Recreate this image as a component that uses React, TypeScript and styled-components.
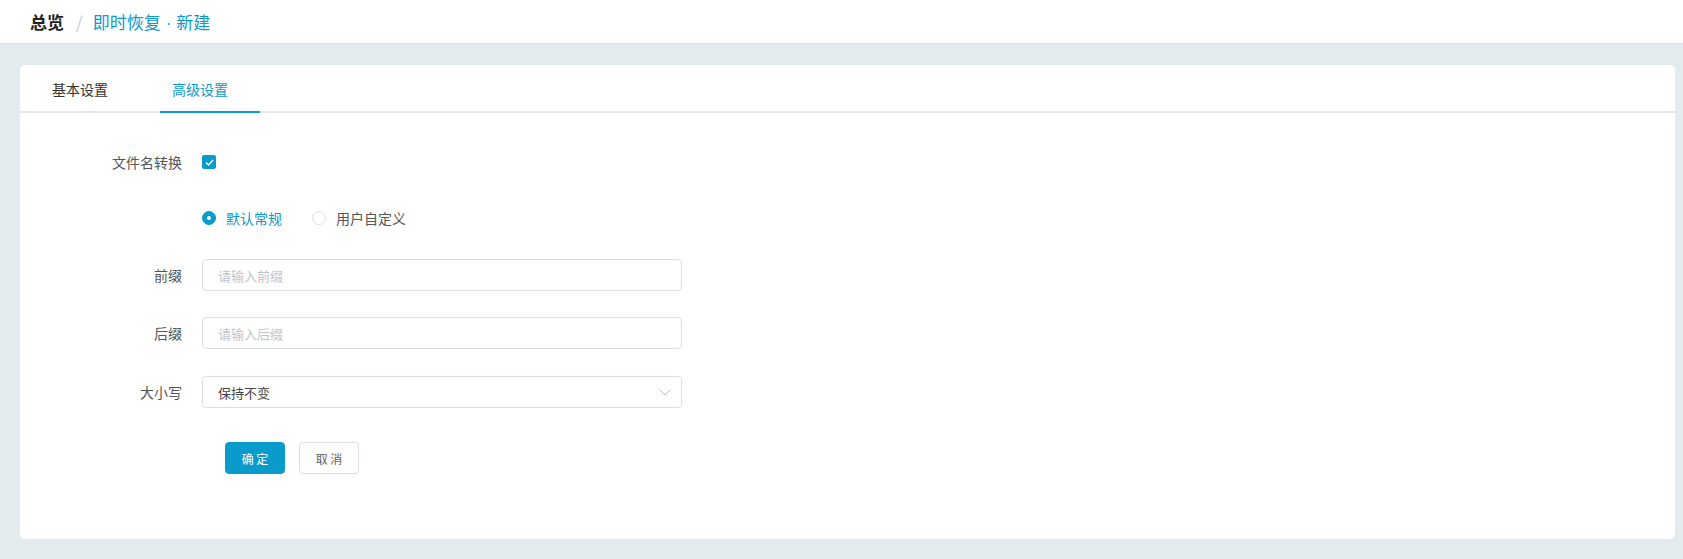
import React, { useState } from 'react';
import styled, { createGlobalStyle } from 'styled-components';

const BLUE = '#0a9bcd';

const GlobalStyle = createGlobalStyle`
  html, body {
    margin: 0;
    padding: 0;
    background: #e4ebee;
    font-family: 'Noto Sans CJK SC', 'Noto Sans', 'Liberation Sans', sans-serif;
  }
  * { box-sizing: border-box; }
`;

const Header = styled.header`
  height: 44px;
  background: #fff;
  border-bottom: 1px solid #dde1e4;
  display: flex;
  align-items: center;
  padding-left: 30px;
  font-size: 17px;
`;

const Crumb = styled.span<{ $active?: boolean }>`
  color: ${p => (p.$active ? BLUE : '#222')};
  font-weight: ${p => (p.$active ? 400 : 700)};
`;

const Dot = styled.span`
  font-family: 'Liberation Sans', sans-serif;
  margin: 0 5px;
`;

const Sep = styled.span`
  color: #c6c9cf;
  margin: 0 10px 0 12px;
`;

const Main = styled.main`
  padding: 21px 8px 22px 20px;
`;

const Card = styled.section`
  background: #fff;
  border-radius: 5px;
  padding-bottom: 65px;
`;

const TabBar = styled.div`
  display: flex;
  height: 48px;
  border-bottom: 2px solid #e4e8ee;
  padding-left: 20px;
  gap: 20px;
`;

const Tab = styled.div<{ $active?: boolean }>`
  width: 100px;
  padding-left: 12px;
  display: flex;
  align-items: center;
  font-size: 14px;
  color: ${p => (p.$active ? BLUE : '#333')};
  border-bottom: 2px solid ${p => (p.$active ? BLUE : 'transparent')};
  margin-bottom: -2px;
  padding-top: 2px;
  cursor: pointer;
`;

const Form = styled.div`
  padding-top: 33px;
`;

const Row = styled.div<{ $mt?: number }>`
  display: flex;
  align-items: center;
  height: 32px;
  margin-top: ${p => p.$mt ?? 0}px;
`;

const Label = styled.label`
  width: 162px;
  text-align: right;
  font-size: 14px;
  color: #555;
  margin-right: 20px;
  flex-shrink: 0;
`;

const CheckBox = styled.span<{ $on: boolean }>`
  width: 14px;
  height: 14px;
  border-radius: 2px;
  background: ${p => (p.$on ? BLUE : '#fff')};
  border: 1px solid ${p => (p.$on ? BLUE : '#dcdfe6')};
  display: inline-flex;
  align-items: center;
  justify-content: center;
  cursor: pointer;
`;

const RadioGroup = styled.div`
  display: flex;
  align-items: center;
  gap: 30px;
`;

const RadioItem = styled.label<{ $on: boolean }>`
  display: flex;
  align-items: center;
  gap: 10px;
  font-size: 14px;
  color: ${p => (p.$on ? BLUE : '#555')};
  cursor: pointer;
`;

const RadioDot = styled.span<{ $on: boolean }>`
  width: 14px;
  height: 14px;
  border-radius: 50%;
  border: 1px solid ${p => (p.$on ? BLUE : '#dcdfe6')};
  background: ${p => (p.$on ? BLUE : '#fff')};
  display: inline-flex;
  align-items: center;
  justify-content: center;
  &::after {
    content: '';
    width: 4px;
    height: 4px;
    border-radius: 50%;
    background: #fff;
    display: ${p => (p.$on ? 'block' : 'none')};
  }
`;

const Input = styled.input`
  width: 480px;
  height: 32px;
  border: 1px solid #dcdfe6;
  border-radius: 4px;
  padding: 0 15px;
  font-size: 13px;
  font-family: inherit;
  color: #444;
  outline: none;
  &::placeholder {
    color: #c0c4cc;
  }
`;

const Select = styled.div`
  width: 480px;
  height: 32px;
  border: 1px solid #dcdfe6;
  border-radius: 4px;
  padding: 0 10px 0 15px;
  display: flex;
  align-items: center;
  justify-content: space-between;
  font-size: 13px;
  color: #444;
  cursor: pointer;
`;

const Actions = styled.div`
  display: flex;
  gap: 14px;
  margin-left: 205px;
  margin-top: 34px;
`;

const Button = styled.button<{ $primary?: boolean }>`
  width: 60px;
  height: 32px;
  border-radius: 4px;
  font-size: 12px;
  font-family: inherit;
  cursor: pointer;
  background: ${p => (p.$primary ? BLUE : '#fff')};
  color: ${p => (p.$primary ? '#fff' : '#606266')};
  border: 1px solid ${p => (p.$primary ? BLUE : '#dcdfe6')};
`;

export default function App() {
  const [tab, setTab] = useState(1);
  const [convert, setConvert] = useState(true);
  const [mode, setMode] = useState<'default' | 'custom'>('default');

  return (
    <>
      <GlobalStyle />
      <Header>
        <Crumb>总览</Crumb>
        <Sep>/</Sep>
        <Crumb $active>
          即时恢复<Dot>·</Dot>新建
        </Crumb>
      </Header>
      <Main>
        <Card>
          <TabBar>
            {['基本设置', '高级设置'].map((t, i) => (
              <Tab key={t} $active={tab === i} onClick={() => setTab(i)}>
                {t}
              </Tab>
            ))}
          </TabBar>
          <Form>
            <Row>
              <Label>文件名转换</Label>
              <CheckBox $on={convert} onClick={() => setConvert(!convert)}>
                {convert && (
                  <svg width="9" height="7" viewBox="0 0 9 7">
                    <path d="M1 3.5 L3.5 6 L8 1" fill="none" stroke="#fff" strokeWidth="1.4" />
                  </svg>
                )}
              </CheckBox>
            </Row>
            <Row $mt={24}>
              <Label />
              <RadioGroup>
                <RadioItem $on={mode === 'default'} onClick={() => setMode('default')}>
                  <RadioDot $on={mode === 'default'} />
                  默认常规
                </RadioItem>
                <RadioItem $on={mode === 'custom'} onClick={() => setMode('custom')}>
                  <RadioDot $on={mode === 'custom'} />
                  用户自定义
                </RadioItem>
              </RadioGroup>
            </Row>
            <Row $mt={25}>
              <Label>前缀</Label>
              <Input placeholder="请输入前缀" />
            </Row>
            <Row $mt={26}>
              <Label>后缀</Label>
              <Input placeholder="请输入后缀" />
            </Row>
            <Row $mt={27}>
              <Label>大小写</Label>
              <Select>
                <span>保持不变</span>
                <svg width="12" height="7" viewBox="0 0 12 7">
                  <path d="M0.5 0.5 L6 6 L11.5 0.5" fill="none" stroke="#b8bcc4" strokeWidth="1" />
                </svg>
              </Select>
            </Row>
            <Actions>
              <Button $primary>确 定</Button>
              <Button>取 消</Button>
            </Actions>
          </Form>
        </Card>
      </Main>
    </>
  );
}
